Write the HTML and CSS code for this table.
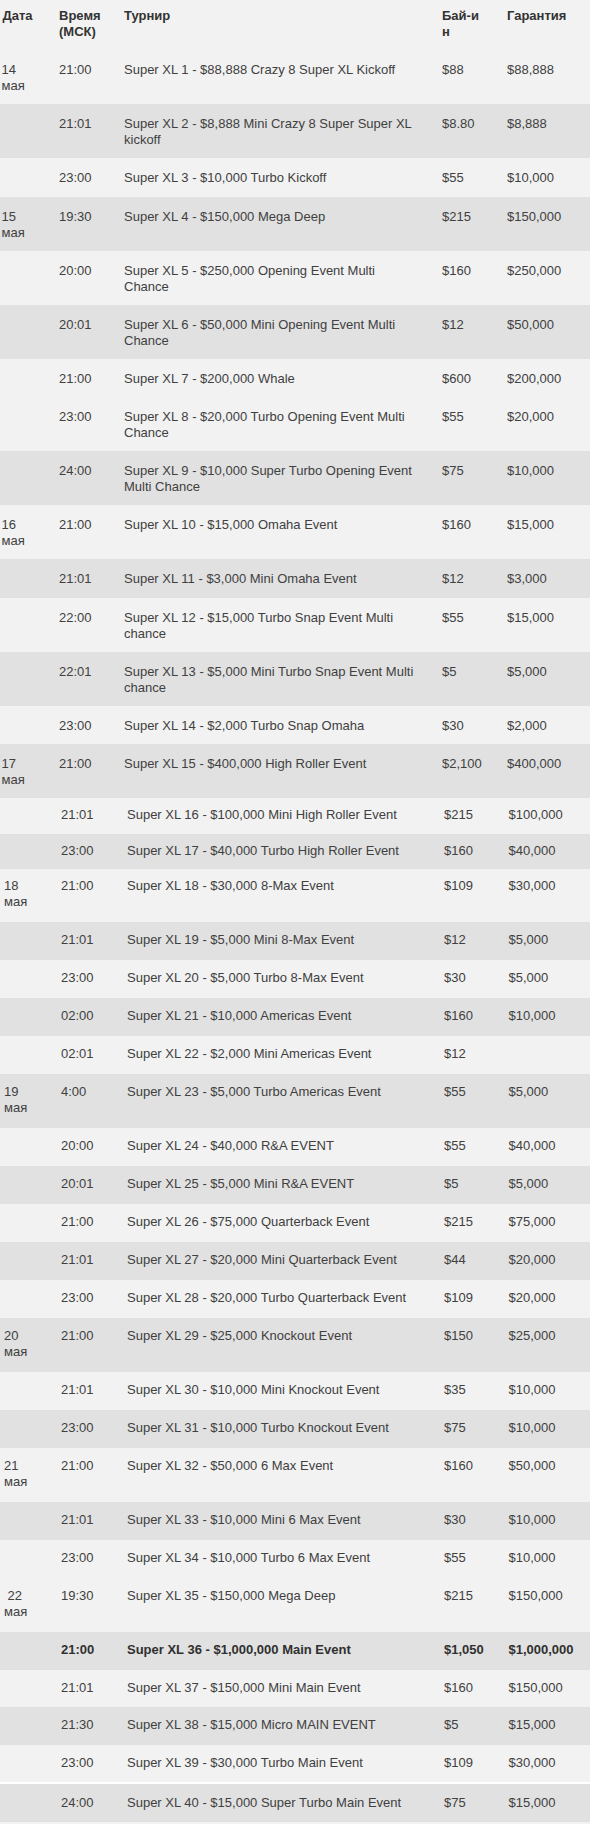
FILE: index.html
```html
<!DOCTYPE html>
<html lang="ru">
<head>
<meta charset="utf-8">
<title>Super XL</title>
<link rel="stylesheet" href="styles.css">
</head>
<body>
<table class="sched">
  <colgroup>
    <col class="c-date"><col class="c-time"><col class="c-name"><col class="c-buy"><col class="c-gar">
  </colgroup>
  <thead>
    <tr class="head">
      <th>Дата</th><th>Время<br>(МСК)</th><th>Турнир</th><th>Бай-и<br>н</th><th>Гарантия</th>
    </tr>
  </thead>
  <tbody>
    <tr class="l"><td>14<br>мая</td><td>21:00</td><td>Super XL 1 - $88,888 Crazy 8 Super XL Kickoff</td><td>$88</td><td>$88,888</td></tr>
    <tr class="g"><td></td><td>21:01</td><td>Super XL 2 - $8,888 Mini Crazy 8 Super Super XL<br>kickoff</td><td>$8.80</td><td>$8,888</td></tr>
    <tr class="l"><td></td><td>23:00</td><td>Super XL 3 - $10,000 Turbo Kickoff</td><td>$55</td><td>$10,000</td></tr>
    <tr class="g"><td>15<br>мая</td><td>19:30</td><td>Super XL 4 - $150,000 Mega Deep</td><td>$215</td><td>$150,000</td></tr>
    <tr class="l"><td></td><td>20:00</td><td>Super XL 5 - $250,000 Opening Event Multi<br>Chance</td><td>$160</td><td>$250,000</td></tr>
    <tr class="g"><td></td><td>20:01</td><td>Super XL 6 - $50,000 Mini Opening Event Multi<br>Chance</td><td>$12</td><td>$50,000</td></tr>
    <tr class="l"><td></td><td>21:00</td><td>Super XL 7 - $200,000 Whale</td><td>$600</td><td>$200,000</td></tr>
    <tr class="l"><td></td><td>23:00</td><td>Super XL 8 - $20,000 Turbo Opening Event Multi<br>Chance</td><td>$55</td><td>$20,000</td></tr>
    <tr class="g"><td></td><td>24:00</td><td>Super XL 9 - $10,000 Super Turbo Opening Event<br>Multi Chance</td><td>$75</td><td>$10,000</td></tr>
    <tr class="l"><td>16<br>мая</td><td>21:00</td><td>Super XL 10 - $15,000 Omaha Event</td><td>$160</td><td>$15,000</td></tr>
    <tr class="g"><td></td><td>21:01</td><td>Super XL 11 - $3,000 Mini Omaha Event</td><td>$12</td><td>$3,000</td></tr>
    <tr class="l"><td></td><td>22:00</td><td>Super XL 12 - $15,000 Turbo Snap Event Multi<br>chance</td><td>$55</td><td>$15,000</td></tr>
    <tr class="g"><td></td><td>22:01</td><td>Super XL 13 - $5,000 Mini Turbo Snap Event Multi<br>chance</td><td>$5</td><td>$5,000</td></tr>
    <tr class="l"><td></td><td>23:00</td><td>Super XL 14 - $2,000 Turbo Snap Omaha</td><td>$30</td><td>$2,000</td></tr>
    <tr class="g"><td>17<br>мая</td><td>21:00</td><td>Super XL 15 - $400,000 High Roller Event</td><td>$2,100</td><td>$400,000</td></tr>
    <tr class="l b2 tight"><td></td><td>21:01</td><td>Super XL 16 - $100,000 Mini High Roller Event</td><td>$215</td><td>$100,000</td></tr>
    <tr class="g b2 tight"><td></td><td>23:00</td><td>Super XL 17 - $40,000 Turbo High Roller Event</td><td>$160</td><td>$40,000</td></tr>
    <tr class="l b2 tight2"><td>18<br>мая</td><td>21:00</td><td>Super XL 18 - $30,000 8-Max Event</td><td>$109</td><td>$30,000</td></tr>
    <tr class="g b2"><td></td><td>21:01</td><td>Super XL 19 - $5,000 Mini 8-Max Event</td><td>$12</td><td>$5,000</td></tr>
    <tr class="l b2"><td></td><td>23:00</td><td>Super XL 20 - $5,000 Turbo 8-Max Event</td><td>$30</td><td>$5,000</td></tr>
    <tr class="g b2"><td></td><td>02:00</td><td>Super XL 21 - $10,000 Americas Event</td><td>$160</td><td>$10,000</td></tr>
    <tr class="l b2"><td></td><td>02:01</td><td>Super XL 22 - $2,000 Mini Americas Event</td><td>$12</td><td></td></tr>
    <tr class="g b2"><td>19<br>мая</td><td>4:00</td><td>Super XL 23 - $5,000 Turbo Americas Event</td><td>$55</td><td>$5,000</td></tr>
    <tr class="l b2"><td></td><td>20:00</td><td>Super XL 24 - $40,000 R&amp;A EVENT</td><td>$55</td><td>$40,000</td></tr>
    <tr class="g b2"><td></td><td>20:01</td><td>Super XL 25 - $5,000 Mini R&amp;A EVENT</td><td>$5</td><td>$5,000</td></tr>
    <tr class="l b2"><td></td><td>21:00</td><td>Super XL 26 - $75,000 Quarterback Event</td><td>$215</td><td>$75,000</td></tr>
    <tr class="g b2"><td></td><td>21:01</td><td>Super XL 27 - $20,000 Mini Quarterback Event</td><td>$44</td><td>$20,000</td></tr>
    <tr class="l b2"><td></td><td>23:00</td><td>Super XL 28 - $20,000 Turbo Quarterback Event</td><td>$109</td><td>$20,000</td></tr>
    <tr class="g b2"><td>20<br>мая</td><td>21:00</td><td>Super XL 29 - $25,000 Knockout Event</td><td>$150</td><td>$25,000</td></tr>
    <tr class="l b2"><td></td><td>21:01</td><td>Super XL 30 - $10,000 Mini Knockout Event</td><td>$35</td><td>$10,000</td></tr>
    <tr class="g b2"><td></td><td>23:00</td><td>Super XL 31 - $10,000 Turbo Knockout Event</td><td>$75</td><td>$10,000</td></tr>
    <tr class="l b2"><td>21<br>мая</td><td>21:00</td><td>Super XL 32 - $50,000 6 Max Event</td><td>$160</td><td>$50,000</td></tr>
    <tr class="g b2"><td></td><td>21:01</td><td>Super XL 33 - $10,000 Mini 6 Max Event</td><td>$30</td><td>$10,000</td></tr>
    <tr class="l b2"><td></td><td>23:00</td><td>Super XL 34 - $10,000 Turbo 6 Max Event</td><td>$55</td><td>$10,000</td></tr>
    <tr class="l b2"><td><span class="ind">22</span><br>мая</td><td>19:30</td><td>Super XL 35 - $150,000 Mega Deep</td><td>$215</td><td>$150,000</td></tr>
    <tr class="g b2 mid strong"><td></td><td>21:00</td><td>Super XL 36 - $1,000,000 Main Event</td><td>$1,050</td><td>$1,000,000</td></tr>
    <tr class="l b2 mid"><td></td><td>21:01</td><td>Super XL 37 - $150,000 Mini Main Event</td><td>$160</td><td>$150,000</td></tr>
    <tr class="g b2 mid"><td></td><td>21:30</td><td>Super XL 38 - $15,000 Micro MAIN EVENT</td><td>$5</td><td>$15,000</td></tr>
    <tr class="l b2 mid"><td></td><td>23:00</td><td>Super XL 39 - $30,000 Turbo Main Event</td><td>$109</td><td>$30,000</td></tr>
    <tr class="g b2 last"><td></td><td>24:00</td><td>Super XL 40 - $15,000 Super Turbo Main Event</td><td>$75</td><td>$15,000</td></tr>
  </tbody>
</table>
</body>
</html>
```
FILE: styles.css
```css
html, body {
  margin: 0;
  padding: 0;
  background: #f2f2f2;
}

.sched {
  width: 590px;
  table-layout: fixed;
  border-collapse: collapse;
  border-spacing: 0;
  font-family: "Liberation Sans", Arial, sans-serif;
  font-size: 13px;
  line-height: 16px;
  color: #404040;
}

.c-date { width: 59px; }
.c-time { width: 65px; }
.c-name { width: 318px; }
.c-buy  { width: 65px; }
.c-gar  { width: 83px; }

.sched th,
.sched td {
  padding: 12px 0 10px 0;
  height: 16.5px;
  vertical-align: top;
  text-align: left;
  white-space: nowrap;
  overflow: hidden;
}

.sched th:first-child { padding-left: 2.5px; }
.sched td:first-child { padding-left: 1.5px; }

.head { background: #f2f2f2; }
.head th {
  padding-top: 8px;
  padding-bottom: 10px;
  font-weight: bold;
  color: #333333;
}

.l { background: #f2f2f2; }
.g { background: #e1e1e1; }

/* second block of rows: columns sit a couple of pixels further right */
.b2 td { padding-top: 10px; padding-bottom: 12px; height: 16px; }
.b2 td:nth-child(1) { padding-left: 4px; }
.b2 td:nth-child(2) { padding-left: 2px; }
.b2 td:nth-child(3) { padding-left: 3px; }
.b2 td:nth-child(4) { padding-left: 2px; }
.b2 td:nth-child(5) { padding-left: 1.5px; }

.b2.tight td { padding-top: 9px; padding-bottom: 10.5px; }
.b2.tight2 td { padding-top: 9px; padding-bottom: 12px; }
.b2.mid td { padding-top: 10px; padding-bottom: 11.5px; }
.b2.last td {
  padding-top: 11px;
  padding-bottom: 11px;
  border-top: 2px solid #ffffff;
}

.ind { padding-left: 3.6px; }

.strong td {
  font-weight: bold;
  color: #303030;
}
```
